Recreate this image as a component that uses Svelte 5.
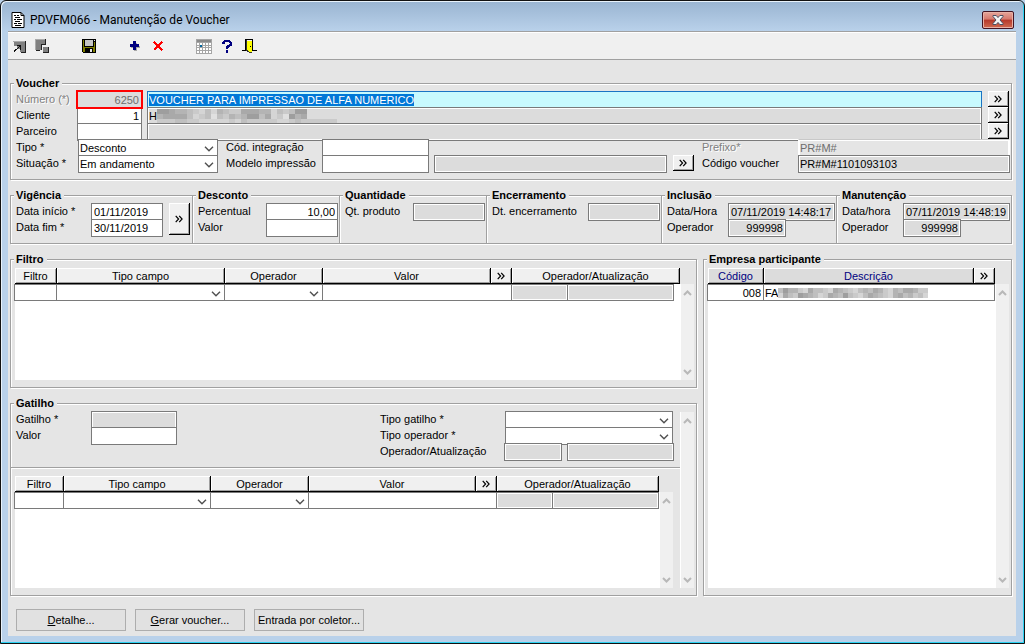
<script lang="ts">
    import { onMount } from 'svelte';

    type Column = { label: string; span?: number; more?: boolean };

    const filterColumns: Column[] = [
        { label: 'Filtro' },
        { label: 'Tipo campo' },
        { label: 'Operador' },
        { label: 'Valor' },
        { label: 'Pesquisar valor', more: true },
        { label: 'Operador/Atualização', span: 2 },
    ];

    // Shades of the masked names, one string per row of blocks (0 = dark, 9 = light)
    const clientMask = ['3345567868567744455867633', '5444468769675653364879354', '777667788888786777778876777777'];
    const companyMask = ['635578466784567865645785644577', '846734568745636786456785465768'];

    let description = $state('VOUCHER PARA IMPRESSAO DE ALFA NUMERICO');
    let descriptionInput: HTMLInputElement;

    onMount(() => {
        descriptionInput.focus();
        descriptionInput.select();
    });

    function shade(digit: string): string {
        const level = 125 + Number(digit) * 11;
        return `rgb(${level},${level},${level})`;
    }
</script>

{#snippet more(label: string)}
    <button type="button" class="more" aria-label={label}>
        <svg width="8" height="8" viewBox="0 0 8 8"><path d="M.7.8 3.6 4 .7 7.2M4.2.8 7.1 4 4.2 7.2" /></svg>
    </button>
{/snippet}

{#snippet drop(id: string, label: string, value: string)}
    <span class="drop">
        <select {id} aria-label={label}><option>{value}</option></select>
        <svg width="10" height="6" viewBox="0 0 10 6"><path d="M1 .8 5 4.8 9 .8" /></svg>
    </span>
{/snippet}

{#snippet scrollbar()}
    <div class="scrollbar">
        <svg width="9" height="6" viewBox="0 0 9 6"><path d="M1 5 4.500 1.500 8 5" /></svg>
        <svg width="9" height="6" viewBox="0 0 9 6"><path d="M1 1 4.500 4.500 8 1" /></svg>
    </div>
{/snippet}

{#snippet mask(rows: string[], size: number)}
    <svg class="mask" width={rows[rows.length - 1].length * size} height={rows.length * 5} aria-hidden="true">
        {#each rows as row, y}
            {#each row as digit, x}
                <rect x={x * size} y={y * 5} width={size} height="5" fill={shade(digit)} />
            {/each}
        {/each}
    </svg>
{/snippet}

{#snippet filterTable(name: string, wide: boolean)}
    <div class="list">
        <div class="sheet">
            <table>
                <colgroup>
                    <col class={wide ? 'c-42' : 'c-49'} />
                    <col class={wide ? 'c-168' : 'c-147'} />
                    <col class="c-98" />
                    <col />
                    <col class="c-21" />
                    <col class="c-56" />
                    <col class="c-106" />
                    {#if wide}<col class="c-6" />{/if}
                </colgroup>
                <thead>
                    <tr>
                        {#each filterColumns as column}
                            <th colspan={wide && column.span ? 3 : (column.span ?? 1)}>
                                {#if column.more}{@render more(column.label)}{:else}{column.label}{/if}
                            </th>
                        {/each}
                    </tr>
                </thead>
                <tbody>
                    <tr>
                        <td><input aria-label="Filtro" /></td>
                        <td>{@render drop(`${name}-campo`, 'Tipo campo', '')}</td>
                        <td>{@render drop(`${name}-operador`, 'Operador', '')}</td>
                        <td colspan="2"><input aria-label="Valor" /></td>
                        <td><input aria-label="Operador da atualização" disabled /></td>
                        <td><input aria-label="Data da atualização" disabled /></td>
                    </tr>
                </tbody>
            </table>
        </div>
        {@render scrollbar()}
    </div>
{/snippet}

<div class="window">
    <header class="title">
        <svg width="14" height="16" viewBox="0 0 14 16">
            <path d="M1 .5h9l3 3v12H1z" fill="#fff" stroke="#000" />
            <path d="M10 .5v3h3M3 3.500h2M6 3.500h2M4 5.500h5M3 7.500h2M6 7.500h5M4 9.500h5M3 11.500h3M7 11.500h4M4 13.500h6" fill="none" stroke="#000" />
        </svg>
        <h1>PDVFM066 - Manutenção de Voucher</h1>
        <button type="button" class="close" aria-label="Fechar">
            <svg width="12" height="10" viewBox="0 0 12 10">
                <path d="M1 .5h3.200L6 2.600 7.800.5H11v1L8 5l3 3.500v1H7.800L6 7.400 4.200 9.500H1v-1L4 5 1 1.500z" fill="#f4f4f4" stroke="#4a5064" />
            </svg>
        </button>
    </header>

    <div class="toolbar">
        <button type="button" aria-label="Restaurar">
            <svg width="13" height="13" viewBox="0 0 13 13">
                <path d="M1 1h11v11H7V9H4V6H1z" fill="#808080" />
                <path d="M0 1.500h12" stroke="#aaa" fill="none" />
                <path d="M12.500 1v11.500H8" stroke="#222" fill="none" />
                <path d="M1 11.500 7 6M3.500 5.500h4v4" stroke="#111" fill="none" />
            </svg>
        </button>
        <button type="button" aria-label="Minimizar">
            <svg width="15" height="14" viewBox="0 0 15 14">
                <path d="M1 1h9v4H6v6H1z" fill="#808080" />
                <path d="M10.500 0v5.500H6.500v5M1 11.500h4" stroke="#222" fill="none" />
                <path d="M.5 11V.5H10" stroke="#aaa" fill="none" />
                <path d="M8 8h5v5H8z" fill="#808080" />
                <path d="M13.500 8v5.500H8" stroke="#222" fill="none" />
            </svg>
        </button>
        <i></i>
        <button type="button" aria-label="Salvar">
            <svg width="14" height="14" viewBox="0 0 14 14">
                <path d="M0 0h14v14H1L0 13z" />
                <path d="M1 1h1v7h10V3h1v10h-2V9H3v4H1z" fill="#808000" />
                <path d="M3 1h8v6H3z" fill="#c6c6c6" />
                <path d="M8 10h2v3H8zM12 1h1v1h-1z" fill="#e8e8e8" />
            </svg>
        </button>
        <i></i>
        <button type="button" aria-label="Incluir">
            <svg width="10" height="10" viewBox="0 0 10 10">
                <path d="M5 2h2v3h3v2H7v3H4V7H1V5h4z" fill="#a8a8a8" />
                <path d="M3 0h3v3h3v3H6v3H3V6H0V3h3z" fill="#000080" />
            </svg>
        </button>
        <button type="button" aria-label="Excluir">
            <svg width="10" height="10" viewBox="0 0 10 10">
                <path d="M1 1 5 5 9 9.500M9 .5 5 5 1 9" stroke="#f00" stroke-width="2.200" fill="none" />
            </svg>
        </button>
        <i></i>
        <button type="button" aria-label="Calendário">
            <svg width="16" height="15" viewBox="0 0 16 15">
                <path d="M0 0h16v15H0z" fill="#a5a5a5" />
                <path d="M1 1h14v2H1z" fill="#8a8a8a" />
                <path d="M1 4h2v2H1zM4 4h2v2H4zM7 4h2v2H7zM10 4h2v2h-2zM13 4h2v2h-2zM1 7h2v1H1zM7 7h2v1H7zM10 7h2v1h-2zM13 7h2v1h-2zM1 9h2v2H1zM4 9h2v2H4zM7 9h2v2H7zM10 9h2v2h-2zM13 9h2v2h-2zM1 12h2v2H1zM4 12h2v2H4zM7 12h2v2H7zM10 12h2v2h-2zM13 12h2v2h-2z" fill="#fff" />
                <path d="M4 6h2v2H4z" fill="#00659c" />
            </svg>
        </button>
        <button type="button" aria-label="Ajuda">
            <svg width="10" height="13" viewBox="0 0 10 13">
                <path d="M1.300 4V2.600L2.700 1.200h4.600L8.700 2.600V5L5 7.200V9M3.700 11.500h2.600" stroke="#000080" stroke-width="2.400" fill="none" />
            </svg>
        </button>
        <button type="button" aria-label="Sair">
            <svg width="15" height="14" viewBox="0 0 15 14">
                <path d="M0 11.500h4M10 11.500h5M3.500 12V.5h7v11" stroke="#000" fill="none" />
                <path d="M5 2h5v11H8L5 11z" fill="#ff0" />
                <path d="M4.500 1v10.500L8 13.500h2" stroke="#333" fill="none" />
                <path d="M8 7h1v1H8z" />
            </svg>
        </button>
    </div>

    <main>
        <fieldset>
            <legend>Voucher</legend>
            <div class="identity">
                <label class="off" for="numero">Número (*)</label>
                <input id="numero" class="num required" value="6250" disabled />
                <input class="current" aria-label="Descrição" bind:this={descriptionInput} bind:value={description} />
                {@render more('Pesquisar número')}

                <label for="cliente">Cliente</label>
                <input id="cliente" class="num" value="1" />
                <div class="readout">H{@render mask(clientMask, 6)}</div>
                {@render more('Pesquisar cliente')}

                <label for="parceiro">Parceiro</label>
                <input id="parceiro" />
                <input aria-label="Nome do parceiro" disabled />
                {@render more('Pesquisar parceiro')}
            </div>
            <div class="details">
                <label for="tipo">Tipo *</label>
                {@render drop('tipo', 'Tipo', 'Desconto')}
                <label class="second" for="integracao">Cód. integração</label>
                <input id="integracao" />
                <label class="third off" for="prefixo">Prefixo*</label>
                <input id="prefixo" class="faded" value="PR#M#" disabled />

                <label for="situacao">Situação *</label>
                {@render drop('situacao', 'Situação', 'Em andamento')}
                <label class="second" for="modelo">Modelo impressão</label>
                <input id="modelo" />
                <input class="model-name" aria-label="Nome do modelo" disabled />
                {@render more('Pesquisar modelo')}
                <label class="third" for="codigo">Código voucher</label>
                <input id="codigo" class="code" value="PR#M#1101093103" disabled />
            </div>
        </fieldset>

        <div class="groups">
            <fieldset>
                <legend>Vigência</legend>
                <div class="pairs period">
                    <label for="inicio">Data início *</label>
                    <input id="inicio" class="w-72" value="01/11/2019" />
                    {@render more('Escolher período')}
                    <label for="fim">Data fim *</label>
                    <input id="fim" class="w-72" value="30/11/2019" />
                </div>
            </fieldset>
            <fieldset>
                <legend>Desconto</legend>
                <div class="pairs">
                    <label for="percentual">Percentual</label>
                    <input id="percentual" class="w-72 num" value="10,00" />
                    <label for="valor">Valor</label>
                    <input id="valor" class="w-72" />
                </div>
            </fieldset>
            <fieldset>
                <legend>Quantidade</legend>
                <div class="pairs">
                    <label for="produto">Qt. produto</label>
                    <input id="produto" class="w-72" disabled />
                </div>
            </fieldset>
            <fieldset>
                <legend>Encerramento</legend>
                <div class="pairs">
                    <label for="encerramento">Dt. encerramento</label>
                    <input id="encerramento" class="w-72" disabled />
                </div>
            </fieldset>
            <fieldset>
                <legend>Inclusão</legend>
                <div class="pairs">
                    <label for="inc-data">Data/Hora</label>
                    <input id="inc-data" class="w-107" value="07/11/2019 14:48:17" disabled />
                    <label for="inc-operador">Operador</label>
                    <input id="inc-operador" class="w-58 num" value="999998" disabled />
                </div>
            </fieldset>
            <fieldset>
                <legend>Manutenção</legend>
                <div class="pairs">
                    <label for="man-data">Data/hora</label>
                    <input id="man-data" class="w-107" value="07/11/2019 14:48:19" disabled />
                    <label for="man-operador">Operador</label>
                    <input id="man-operador" class="w-58 num" value="999998" disabled />
                </div>
            </fieldset>
        </div>

        <div class="lower">
            <div class="left">
                <fieldset class="filter">
                    <legend>Filtro</legend>
                    {@render filterTable('filtro', true)}
                </fieldset>
                <fieldset class="trigger">
                    <legend>Gatilho</legend>
                    <div class="trigger-body">
                        <div class="trigger-main">
                            <div class="trigger-fields">
                                <div class="trigger-value">
                                    <label for="gatilho">Gatilho *</label>
                                    <input id="gatilho" disabled />
                                    <label for="gatilho-valor">Valor</label>
                                    <input id="gatilho-valor" />
                                </div>
                                <div class="trigger-type">
                                    <label for="tipo-gatilho">Tipo gatilho *</label>
                                    {@render drop('tipo-gatilho', 'Tipo gatilho', '')}
                                    <label for="tipo-operador">Tipo operador *</label>
                                    {@render drop('tipo-operador', 'Tipo operador', '')}
                                    <label for="atualizacao">Operador/Atualização</label>
                                    <div class="update">
                                        <input id="atualizacao" class="w-58" disabled />
                                        <input class="w-107" aria-label="Data da atualização" disabled />
                                    </div>
                                </div>
                            </div>
                            {@render filterTable('gatilho', false)}
                        </div>
                        {@render scrollbar()}
                    </div>
                </fieldset>
            </div>

            <fieldset class="company">
                <legend>Empresa participante</legend>
                <div class="list">
                    <div class="sheet">
                        <table>
                            <colgroup><col class="c-56" /><col /><col class="c-21" /></colgroup>
                            <thead>
                                <tr>
                                    <th class="link">Código</th>
                                    <th class="link">Descrição</th>
                                    <th>{@render more('Pesquisar empresa')}</th>
                                </tr>
                            </thead>
                            <tbody>
                                <tr>
                                    <td><input class="num" aria-label="Código" value="008" /></td>
                                    <td colspan="2"><div class="readout white">FA{@render mask(companyMask, 5)}</div></td>
                                </tr>
                            </tbody>
                        </table>
                    </div>
                    {@render scrollbar()}
                </div>
            </fieldset>
        </div>

        <footer>
            <button type="button"><u>D</u>etalhe...</button>
            <button type="button"><u>G</u>erar voucher...</button>
            <button type="button">Entrada por coletor...</button>
        </footer>
    </main>
</div>

<style>
    :global(body) {
        margin: 0;
        background: #b9d1ea;
    }

    .window,
    .window * {
        box-sizing: border-box;
    }

    .window {
        min-height: 100vh;
        display: flex;
        flex-direction: column;
        padding: 0 8px 7px 7px;
        border: 1px solid #111;
        border-radius: 6px 6px 0 0;
        background: linear-gradient(#99b4d1, #b9d1ea 30px);
        box-shadow: inset -1px -1px 0 #2cd3f3, inset 1px 1px 0 #e8f2fb;
        color: #000;
        font: 11px/16px "Liberation Sans", Arial, sans-serif;
    }

    button,
    input,
    select {
        margin: 0;
        border-radius: 0;
        color: inherit;
        font: inherit;
    }

    .title {
        height: 30px;
        display: flex;
        align-items: center;
        gap: 5px;
        padding: 7px 2px 0 3px;
    }

    h1 {
        flex: 1;
        margin: 0;
        font: 12px/16px Roboto, sans-serif;
    }

    .close {
        width: 32px;
        height: 18px;
        display: grid;
        place-items: center;
        padding: 0;
        border: 1px solid #431422;
        border-radius: 2px;
        background: linear-gradient(#e5a59a, #d6786c 45%, #b5382a 50%, #cf6a50);
        box-shadow: inset 0 0 0 1px #e8b0a5;
    }

    .toolbar {
        height: 29px;
        display: flex;
        align-items: center;
        padding-top: 1px;
        border-top: 1px solid #a0a0a0;
        border-bottom: 1px solid #a0a0a0;
        background: #f0f0f0;
        box-shadow: inset 0 1px 0 #fff;
    }

    .toolbar button {
        width: 23px;
        height: 23px;
        display: grid;
        place-items: center;
        padding: 0;
        border: 0;
        background: none;
    }

    .toolbar svg {
        shape-rendering: crispEdges;
    }

    .toolbar i {
        width: 23px;
    }

    main {
        flex: 1;
        padding: 17px 4px 5px 2px;
        background: #e5e5e5;
    }

    fieldset {
        min-width: 0;
        margin: 0;
        padding: 1px 1px 8px 5px;
        border: 1px solid #a0a0a0;
        box-shadow: inset 1px 1px 0 #fff, 1px 1px 0 #fff;
    }

    legend {
        height: 13px;
        margin-left: -2px;
        padding: 0 3px 0 2px;
        background: #e5e5e5;
        font-weight: bold;
        line-height: 13px;
    }

    label {
        white-space: nowrap;
    }

    .off {
        color: #808080;
        text-shadow: 1px 1px 0 #fff;
    }

    input,
    select,
    .readout {
        width: 100%;
        min-width: 0;
        height: 18px;
        padding: 0 2px;
        border: 1px solid #7a7a7a;
        background: #fff;
        outline: 0;
    }

    input:disabled,
    .readout {
        background: #dcdcdc;
        box-shadow: inset 0 0 0 1px #fff;
    }

    input.num {
        text-align: right;
    }

    input.required {
        height: 17px;
        position: relative;
        z-index: 1;
        border-color: #f00;
        outline: 1px solid #f00;
        box-shadow: none;
        color: #6d6d6d;
    }

    .current {
        border-color: #1a74c4 #1a74c4 #7a7a7a;
        background: #c8fafe;
        padding: 0 1px;
    }

    .current::selection {
        background: #0078d7;
        color: #fff;
    }

    input.faded,
    input.code {
        padding: 0 1px;
    }

    input.faded {
        border-color: #c8c8c8 #fff #fff;
        background: #e5e5e5;
        color: #6d6d6d;
    }

    .readout {
        display: flex;
        align-items: center;
        padding: 0 1px;
        line-height: 16px;
    }

    .readout.white {
        background: #fff;
    }

    .mask {
        flex: none;
    }

    .drop {
        display: grid;
        grid-template-rows: 100%;
        align-items: center;
        height: 18px;
    }

    .drop select {
        grid-area: 1 / 1;
        height: 100%;
        appearance: none;
        padding: 0 18px 0 1px;
        line-height: 16px;
    }

    .drop svg {
        grid-area: 1 / 1;
        justify-self: end;
        margin: 2px 4px 0 0;
        pointer-events: none;
        fill: none;
        stroke: #505050;
        stroke-width: 1.4;
    }

    .more {
        width: 21px;
        height: 16px;
        display: grid;
        place-items: center;
        padding: 0;
        border: 0;
        border-right: 1px solid #000;
        border-bottom: 1px solid #000;
        background: #f0f0f0;
        box-shadow: inset 1px 1px 0 #fff, inset -1px -1px 0 #a0a0a0;
    }

    .more svg {
        fill: none;
        stroke: #000;
        stroke-width: 1.2;
    }

    .identity {
        display: grid;
        grid-template-columns: 61px 65px minmax(0, 1fr) 21px;
        grid-auto-rows: 16px;
        padding-right: 1px;
    }

    .identity > :nth-child(4n + 3) {
        width: auto;
        margin: 0 6px 0 5px;
    }

    .details {
        display: grid;
        grid-template-columns: 62px 140px 104px 107px minmax(0, 1fr) 21px 104px 212px;
        grid-auto-rows: 16px;
    }

    .second,
    .third {
        padding-left: 8px;
    }

    .third {
        grid-column: 7;
    }

    .model-name {
        width: auto;
        margin: 0 6px 0 5px;
    }

    .groups {
        display: grid;
        grid-template-columns: 182fr 147fr 147fr 175fr 175fr 175fr;
        margin-top: 9px;
        padding-right: 1px;
    }

    .groups fieldset {
        margin-right: -1px;
    }

    .pairs {
        display: grid;
        grid-template-columns: 1fr auto;
        grid-template-rows: 16px 16px;
    }

    .period {
        grid-template-columns: 1fr auto auto;
        column-gap: 6px;
        padding-right: 1px;
    }

    .period .more {
        grid-row: span 2;
        height: 32px;
    }

    .w-58 {
        width: 58px;
    }

    .w-72 {
        width: 72px;
    }

    .w-107 {
        width: 107px;
    }

    .lower {
        display: grid;
        grid-template-columns: 687fr 309fr;
        gap: 6px;
        margin-top: 9px;
    }

    .left {
        display: grid;
        gap: 9px;
        min-width: 0;
    }

    .filter,
    .company {
        padding: 2px 2px 7px 4px;
    }

    .filter legend,
    .company legend {
        margin-left: -1px;
    }

    .list {
        display: flex;
        height: 100%;
        min-height: 112px;
    }

    .sheet {
        flex: 1;
        min-width: 0;
        padding-right: 1px;
        background: linear-gradient(#e5e5e5 16px, #fff 16px);
    }

    .scrollbar {
        width: 13px;
        display: flex;
        flex-direction: column;
        align-items: center;
        justify-content: space-between;
        margin-top: 16px;
        padding: 6px 0 5px;
        background: #f0f0f0;
    }

    .scrollbar svg {
        fill: none;
        stroke: #b8b8b8;
        stroke-width: 2;
    }

    table {
        width: 100%;
        table-layout: fixed;
        border-spacing: 0;
    }

    th {
        height: 16px;
        padding: 1px 0 0;
        border-right: 1px solid #000;
        border-bottom: 1px solid #000;
        background: #f0f0f0;
        box-shadow: inset 1px 1px 0 #fff, inset -1px -1px 0 #a0a0a0;
        font-weight: normal;
        line-height: 14px;
    }

    th.link {
        background: #dcdcdc;
        color: #000080;
    }

    th .more {
        width: 100%;
        height: 14px;
        border: 0;
        background: none;
        box-shadow: none;
    }

    td {
        height: 17px;
        padding: 0;
    }

    td input,
    td .readout,
    td .drop {
        width: calc(100% + 1px);
        height: 17px;
        margin-left: -1px;
    }

    td input {
        display: block;
    }

    .c-6 { width: 6px; }
    .c-21 { width: 21px; }
    .c-42 { width: 42px; }
    .c-49 { width: 49px; }
    .c-56 { width: 56px; }
    .c-98 { width: 98px; }
    .c-106 { width: 106px; }
    .c-147 { width: 147px; }
    .c-168 { width: 168px; }

    .trigger {
        padding: 1px 2px 7px 0;
    }

    .trigger legend {
        margin-left: 3px;
    }

    .trigger-body {
        display: flex;
    }

    .trigger-main {
        flex: 1;
        min-width: 0;
    }

    .trigger-main .list {
        height: auto;
        margin: 8px 7px 0 4px;
    }

    .trigger-body > .scrollbar {
        width: 14px;
        margin-top: 1px;
        border-left: 1px solid #fff;
    }

    .trigger-fields {
        display: flex;
        justify-content: space-between;
        padding: 0 7px 8px 5px;
        border-bottom: 1px solid #a0a0a0;
        box-shadow: 0 1px 0 #fff;
    }

    .trigger-value {
        display: grid;
        grid-template-columns: 75px 86px;
        grid-auto-rows: 16px;
    }

    .trigger-type {
        display: grid;
        grid-template-columns: 125px 168px;
        grid-auto-rows: 16px;
    }

    .update {
        display: flex;
        justify-content: space-between;
        z-index: 1;
        margin: 0 -1px;
    }

    footer {
        display: flex;
        gap: 9px;
        margin-top: 13px;
        padding-left: 6px;
    }

    footer button {
        width: 110px;
        height: 22px;
        padding: 0;
        border: 1px solid #adadad;
        background: #e1e1e1;
        white-space: nowrap;
    }
</style>
